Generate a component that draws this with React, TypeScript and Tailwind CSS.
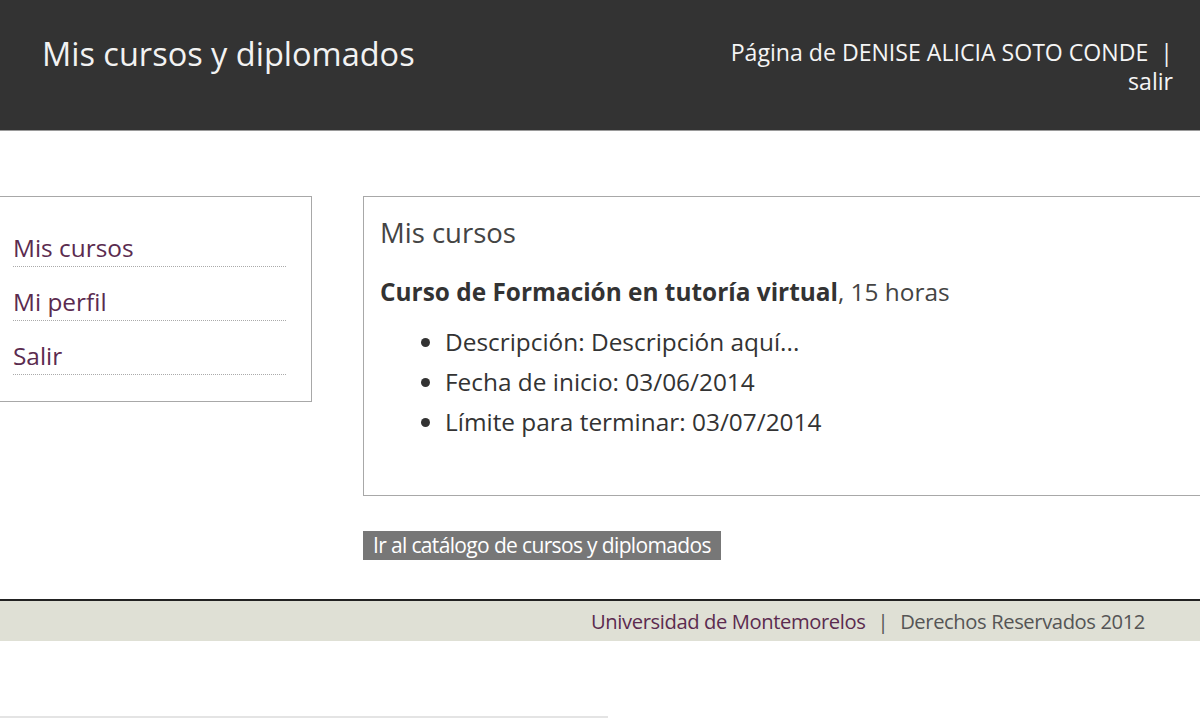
import React from "react"

const menu = ["Mis cursos", "Mi perfil", "Salir"]

const details = [
  "Descripción: Descripción aquí...",
  "Fecha de inicio: 03/06/2014",
  "Límite para terminar: 03/07/2014"
]

const App: React.FC = () => {
  return (
    <div className="min-h-[719px] w-[1200px] overflow-hidden bg-white font-['Open_Sans',sans-serif]">
      {/* header */}
      <header className="flex h-[131px] items-start justify-between border-b border-[#9a9a9a] bg-[#333333] pl-[42px] pr-[27px]">
        <h1 className="mt-[33px] text-[32.5px] leading-[42px] text-[#f2f2f2]">
          Mis cursos y diplomados
        </h1>
        <div className="mt-[38px] text-right text-[23.1px] leading-[29px] text-[#f5f5f5]">
          <div>Página de DENISE ALICIA SOTO CONDE&nbsp;&nbsp;|</div>
          <a className="block">salir</a>
        </div>
      </header>

      {/* content */}
      <div className="mt-[65px] flex items-start gap-[51px]">
        {/* sidebar */}
        <nav className="-ml-px flex h-[206px] w-[313px] flex-col gap-[17px] border border-[#a8a8a8] pl-[13px] pr-[25px] pt-[33px]">
          {menu.map((item) => (
            <a
              key={item}
              className="block border-b border-dotted border-[#aaa] text-[24.4px] leading-[36px] text-[#5b2b4f]"
            >
              {item}
            </a>
          ))}
        </nav>

        {/* main */}
        <div className="flex-1">
          <section className="-mr-px h-[300px] border border-[#a8a8a8] pl-[16px] pt-[17px]">
            <h2 className="text-[27.5px] leading-[38px] text-[#444]">Mis cursos</h2>
            <p className="mt-[24px] text-[24.4px] leading-[32px] text-[#333]">
              <b className="font-bold">Curso de Formación en tutoría virtual</b>
              <span className="text-[#444]">, 15 horas</span>
            </p>
            <ul className="mt-[14px] list-disc pl-[65px] text-[24.4px] leading-[40px] text-[#333]">
              {details.map((d) => (
                <li key={d}>{d}</li>
              ))}
            </ul>
          </section>
          <button className="mt-[35px] h-[29px] bg-[#777] px-[10px] text-[21px] leading-[29px] tracking-[-0.65px] text-white">
            Ir al catálogo de cursos y diplomados
          </button>
        </div>
      </div>

      {/* footer */}
      <footer className="mt-[39px] flex h-[42px] items-center justify-end border-t-2 border-[#222] bg-[#dfe0d5] pr-[55px] text-[20.2px] tracking-[-0.4px] text-[#555]">
        <span className="text-[#5b2b4f]">Universidad de Montemorelos</span>
        <span className="mx-[12px]">|</span>
        <span>Derechos Reservados 2012</span>
      </footer>

      <div className="mt-[75px] h-[2px] w-[608px] bg-[#e4e4e4]" />
    </div>
  )
}

export default App
